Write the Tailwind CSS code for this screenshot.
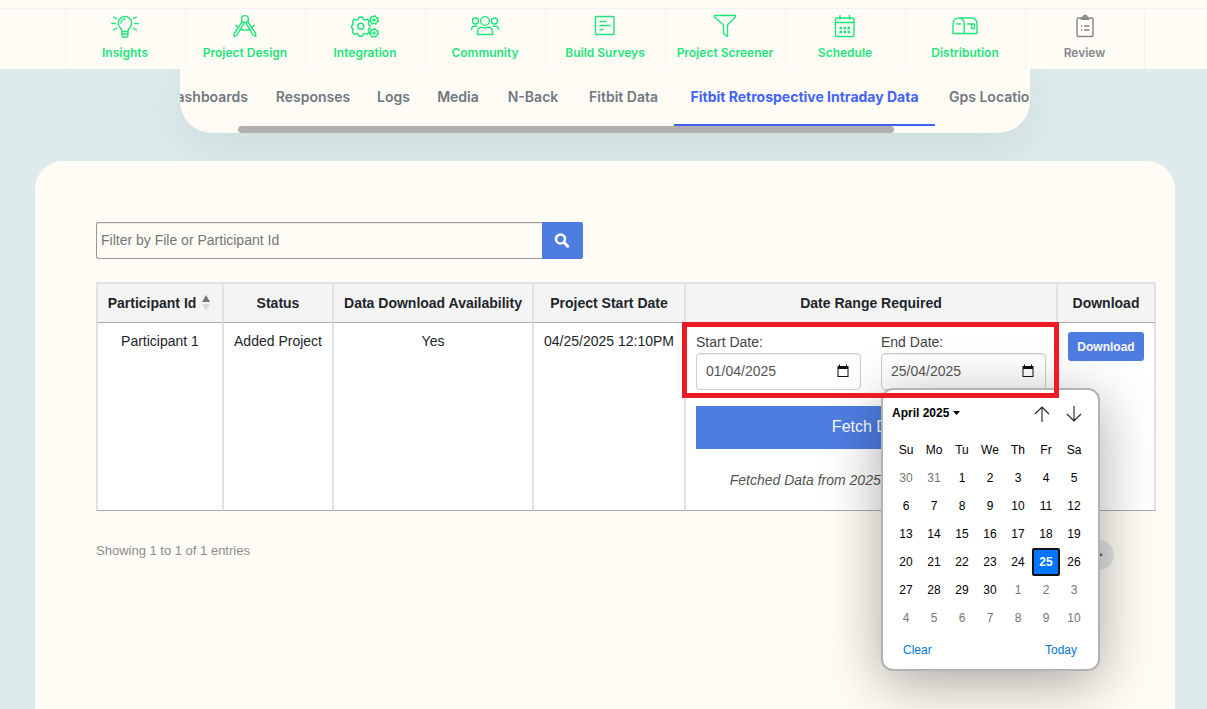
<!DOCTYPE html>
<html lang="en">
<head>
<meta charset="utf-8">
<title>Fitbit Retrospective Intraday Data</title>
<script src="https://cdn.jsdelivr.net/npm/@tailwindcss/browser@4"></script>
</head>
<body class="flex min-h-screen flex-col bg-[#ddebeb] font-['Liberation_Sans',Arial,sans-serif] text-sm text-[#212529]">

<header class="relative z-10 bg-[#fffcf5] pt-2">
  <nav class="flex justify-center border-t border-[#f2f3f5] pl-[3px] font-['Inter',sans-serif] text-xs font-semibold text-[#1fe47c]" aria-label="Project steps">
    <a href="#" class="flex h-15 w-30 flex-col items-center gap-1 border-l border-[#f4f4f4] pt-1 pr-px whitespace-nowrap">
      <svg class="h-7 w-7" viewBox="0 0 28 28" fill="none" stroke="currentColor" stroke-width="1.4" stroke-linecap="round"><path d="M11 18.500c0-2-1-2.600-2.200-4.200a6.700 6.700 0 1 1 10.400 0C18 15.900 17 16.500 17 18.500zM11 18.500v4c0 1 .8 1.500 1.500 1.500h3c.9 0 1.500-.6 1.500-1.500v-4M11 21h6M10 10a4 4 0 0 1 4-4M.8 10.500h3.400M23.800 10.500h3.400M2.500 4l3 1.700M25.500 4l-3 1.700M2.500 17l3-1.700M25.500 17l-3-1.700"/></svg>
      <span>Insights</span></a>
    <a href="#" class="flex h-15 w-30 flex-col items-center gap-1 border-l border-[#f4f4f4] pt-1 pr-px whitespace-nowrap">
      <svg class="h-7 w-7" viewBox="0 0 28 28" fill="none" stroke="currentColor" stroke-width="1.4" stroke-linejoin="round" stroke-linecap="round"><circle cx="14" cy="6" r="3.400"/><path d="M11.300 8.500L3.300 20.500v3l2.700-1.500L13.300 9.700M16.700 8.500l8 12v3L22 22 14.700 9.700M4.800 12.300l1.700 1.500M23.200 12.300l-1.700 1.500M9 16c3 1.300 7 1.300 10 0"/></svg>
      <span>Project Design</span></a>
    <a href="#" class="flex h-15 w-30 flex-col items-center gap-1 border-l border-[#f4f4f4] pt-1 pr-px whitespace-nowrap">
      <svg class="h-7 w-7" viewBox="0 0 28 28" fill="none" stroke="currentColor" stroke-width="1.4" stroke-linejoin="round"><path d="M7.400 6.300l.6-2h3.600l.6 2 1.900.8 1.900-1 2.300 2.400-1 1.900.8 1.700.8.500v2.400l-.8.400-.8 1.700 1 1.900-2.300 2.400-1.900-1-1.900.8-.6 2H8l-.6-2-1.900-.8-1.900 1-2.300-2.400 1-1.900-.8-1.700-.8-.400v-2.400l.8-.5.8-1.700-1-1.900 2.300-2.400 1.900 1z"/><circle cx="9.800" cy="13.300" r="3"/><circle cx="23" cy="7" r="3.600"/><circle cx="23" cy="7" r="1"/><circle cx="23" cy="20" r="3.600"/><circle cx="23" cy="20" r="1"/><path stroke-width="1.700" stroke-dasharray="1.800 2" d="M27.200 7a4.200 4.200 0 1 1-8.400 0 4.200 4.200 0 0 1 8.400 0M27.200 20a4.200 4.200 0 1 1-8.400 0 4.200 4.200 0 0 1 8.400 0"/></svg>
      <span>Integration</span></a>
    <a href="#" class="flex h-15 w-30 flex-col items-center gap-1 border-l border-[#f4f4f4] pt-1 pr-px whitespace-nowrap">
      <svg class="h-7 w-7" viewBox="0 0 28 28" fill="none" stroke="currentColor" stroke-width="1.400" stroke-linecap="round"><circle cx="14" cy="8" r="4.400"/><circle cx="4.500" cy="8" r="3"/><circle cx="23.500" cy="8" r="3"/><path d="M6.500 21.500v-3a4 4 0 0 1 4-4.200h1c1.700.9 3.300.9 5 0h1a4 4 0 0 1 4 4.200v3zM.7 16.500v-1a2.200 2.200 0 0 1 2.300-2.200h3M27.300 16.500v-1a2.200 2.200 0 0 0-2.300-2.200h-3"/></svg>
      <span>Community</span></a>
    <a href="#" class="flex h-15 w-30 flex-col items-center gap-1 border-l border-[#f4f4f4] pt-1 pr-px whitespace-nowrap">
      <svg class="h-7 w-7" viewBox="0 0 28 28" fill="none" stroke="currentColor" stroke-width="1.400" stroke-linecap="round"><rect x="4.500" y="3.500" width="18.500" height="18" rx="1"/><path d="M9 8.500h6M9 12.500h10M9 16.500h3"/></svg>
      <span>Build Surveys</span></a>
    <a href="#" class="flex h-15 w-30 flex-col items-center gap-1 border-l border-[#f4f4f4] pt-1 pr-px whitespace-nowrap">
      <svg class="h-7 w-7" viewBox="0 0 28 28" fill="none" stroke="currentColor" stroke-width="1.400" stroke-linejoin="round"><path d="M3.500 2.500h21V4l-8 8v11.500l-4-3V12l-9-8z"/></svg>
      <span>Project Screener</span></a>
    <a href="#" class="flex h-15 w-30 flex-col items-center gap-1 border-l border-[#f4f4f4] pt-1 pr-px whitespace-nowrap">
      <svg class="h-7 w-7" viewBox="0 0 28 28" fill="none" stroke="currentColor" stroke-width="1.400" stroke-linecap="round"><rect x="4.500" y="5" width="18.500" height="18.500" rx="1.500"/><path d="M4.500 9.500H23M9 2.500V6M18.500 2.500V6"/><path stroke-width="2.600" stroke-linecap="butt" d="M8.500 15h2.500M12.500 15H15M16.500 15H19M8.500 19h2.500M12.500 19H15M16.500 19H19"/></svg>
      <span>Schedule</span></a>
    <a href="#" class="flex h-15 w-30 flex-col items-center gap-1 border-l border-[#f4f4f4] pt-1 pr-px whitespace-nowrap">
      <svg class="h-7 w-7" viewBox="0 0 28 28" fill="none" stroke="currentColor" stroke-width="1.400" stroke-linecap="round" stroke-linejoin="round"><path d="M2 20.500V10.500a5.600 5.600 0 0 1 11.200 0v10zM7.500 5h13a5.500 5.500 0 0 1 5.500 5.500v10H13.200M6 11h3.500M16.500 11h7M20.500 11v4.500h3V11"/></svg>
      <span>Distribution</span></a>
    <a href="#" class="flex h-15 w-30 flex-col items-center gap-1 border-x border-[#f4f4f4] pt-1 pr-px whitespace-nowrap text-[#85868a]">
      <svg class="h-7 w-7" viewBox="0 0 28 28" fill="none" stroke="currentColor" stroke-width="1.400" stroke-linecap="round"><rect x="6" y="5" width="16" height="18.500" rx="1.500"/><path stroke-width="1.800" d="M10.500 6h7M12 5c0-3 4-3 4 0"/><path d="M10.500 13h.2M13.500 13H18M10.500 17h.2M13.500 17H18"/></svg>
      <span>Review</span></a>
  </nav>
</header>

<div class="relative pl-[3px]">
  <div class="mx-auto max-w-[850px] overflow-hidden rounded-b-[32px] bg-[#fffcf5] shadow-[0_12px_50px_rgba(50,80,100,0.1)]">
    <div class="flex font-['Inter',sans-serif] text-sm font-semibold whitespace-nowrap text-[#6f7881]" role="tablist">
      <button role="tab" class="flex h-[57px] w-[82px] shrink-0 items-center justify-end overflow-hidden pr-3.5 pb-0.5">Dashboards</button>
      <button role="tab" class="h-[57px] w-[102px] shrink-0 pb-0.5">Responses</button>
      <button role="tab" class="h-[57px] w-[59px] shrink-0 pb-0.5">Logs</button>
      <button role="tab" class="h-[57px] w-[70px] shrink-0 pb-0.5">Media</button>
      <button role="tab" class="h-[57px] w-[80px] shrink-0 pb-0.5">N-Back</button>
      <button role="tab" class="h-[57px] w-[101px] shrink-0 pb-0.5">Fitbit Data</button>
      <button role="tab" aria-selected="true" class="h-[57px] w-[261px] shrink-0 border-b-2 border-[#4263fb] font-bold text-[#4263fb]">Fitbit Retrospective Intraday Data</button>
      <button role="tab" class="h-[57px] shrink-0 px-3.5 pb-0.5">Gps Locations</button>
    </div>
    <div class="h-[7px] pr-[136px] pl-[58px]"><div class="h-full rounded-full bg-[#b0b0b0]"></div></div>
  </div>
</div>

<div class="relative flex flex-1 flex-col pt-7 pl-[3px]">
  <main class="mx-auto w-full max-w-[1140px] flex-1 rounded-t-[28px] bg-[#fffcf5] pt-[61px] pr-[19px] pl-[61px]">
    <form class="flex h-[37px] max-w-[487px]">
      <input type="text" aria-label="Filter by File or Participant Id" placeholder="Filter by File or Participant Id" class="min-w-0 flex-1 rounded-l-[3px] border border-r-0 border-[#999] px-1 pb-0.5 shadow-[inset_0_1px_1px_rgba(0,0,0,0.08)] placeholder:text-[#757575]">
      <button type="button" aria-label="Search" class="flex w-[41px] items-center justify-center rounded-r-[2px] bg-[#4e7de2] pr-0.5 text-white">
        <svg class="h-4 w-4" viewBox="0 0 16 16" fill="none" stroke="currentColor" stroke-width="2.600"><circle cx="6.500" cy="6" r="4.500"/><path stroke-linecap="round" stroke-width="3" d="M10.300 9.800l3.400 3.400"/></svg>
      </button>
    </form>

    <table class="mt-[23px] w-full table-fixed border-separate border-spacing-0 text-center">
      <colgroup><col class="w-[126px]"><col class="w-[110px]"><col class="w-[200px]"><col class="w-[152px]"><col><col class="w-[100px]"></colgroup>
      <thead class="bg-[#f4f4f4] whitespace-nowrap">
        <tr class="h-[41px]">
          <th class="border-t-2 border-b border-l-2 border-[#dee2e6] border-b-[#a9a9a9]"><span class="flex items-center justify-center gap-1.5 pr-0.5">Participant Id
            <svg class="h-4 w-2" viewBox="0 0 8 16"><path fill="#777" d="M0 7l4-7 4 7z"/><path fill="#d9d9d9" d="M0 9h8l-4 7z"/></svg></span></th>
          <th class="border-t-2 border-b border-l-2 border-[#dee2e6] border-b-[#a9a9a9]">Status</th>
          <th class="border-t-2 border-b border-l-2 border-[#dee2e6] border-b-[#a9a9a9]">Data Download Availability</th>
          <th class="border-t-2 border-b border-l-2 border-[#dee2e6] border-b-[#a9a9a9]">Project Start Date</th>
          <th class="border-t-2 border-b border-l-2 border-[#dee2e6] border-b-[#a9a9a9]">Date Range Required</th>
          <th class="border-x-2 border-t-2 border-b border-[#dee2e6] border-b-[#a9a9a9]">Download</th>
        </tr>
      </thead>
      <tbody class="bg-white">
        <tr class="h-[188px] align-top">
          <td class="border-b border-l-2 border-[#dee2e6] border-b-[#a9a9a9] pt-2">Participant 1</td>
          <td class="border-b border-l-2 border-[#dee2e6] border-b-[#a9a9a9] pt-2">Added Project</td>
          <td class="border-b border-l-2 border-[#dee2e6] border-b-[#a9a9a9] pt-2">Yes</td>
          <td class="border-b border-l-2 border-[#dee2e6] border-b-[#a9a9a9] pt-2 whitespace-nowrap">04/25/2025 12:10PM</td>
          <td class="relative border-b border-l-2 border-[#dee2e6] border-b-[#a9a9a9] px-2.5 pt-[9px]">
            <div class="grid grid-cols-2 gap-5 text-left text-[#444]">
              <div>
                <label for="start" class="block h-[21px]">Start Date:</label>
                <div class="flex h-[37px] items-center rounded-[4px] border border-[#ccc] bg-white pr-2.5 pb-0.5 pl-[9px] shadow-[inset_0_1px_1px_rgba(0,0,0,0.08)]">
                  <input id="start" type="text" value="01/04/2025" class="min-w-0 flex-1 text-[#555]">
                  <button type="button" aria-label="Open start date calendar"><svg class="h-3.5 w-3.5" viewBox="0 0 14 14"><path fill="#111" fill-rule="evenodd" d="M1.500 2H3V0.500h1V2h6V0.500h1V2h1.500v11h-11zM2.500 5v7h9V5z"/></svg></button>
                </div>
              </div>
              <div class="relative">
                <label for="end" class="block h-[21px]">End Date:</label>
                <div class="flex h-[37px] items-center rounded-[4px] border border-[#ccc] bg-white pr-2.5 pb-0.5 pl-[9px] shadow-[inset_0_1px_1px_rgba(0,0,0,0.08)]">
                  <input id="end" type="text" value="25/04/2025" class="min-w-0 flex-1 text-[#555]">
                  <button type="button" aria-label="Open end date calendar"><svg class="h-3.5 w-3.5" viewBox="0 0 14 14"><path fill="#111" fill-rule="evenodd" d="M1.500 2H3V0.500h1V2h6V0.500h1V2h1.500v11h-11zM2.500 5v7h9V5z"/></svg></button>
                </div>

                <div role="dialog" aria-label="Choose date" class="absolute top-[56px] left-0 z-20 w-[219px] rounded-xl border-2 border-[#b3b3b3] bg-white pt-2 pr-2 pb-[9px] pl-[9px] text-xs text-black shadow-[0_12px_56px_rgba(0,0,0,0.34)]">
                  <div class="flex h-[38px] items-start">
                    <button type="button" class="flex h-8 flex-1 items-center gap-1 pb-0.5 font-bold">April 2025
                      <svg class="h-1 w-[7px]" viewBox="0 0 7 4"><path d="M0 0h7L3.500 4z"/></svg></button>
                    <button type="button" aria-label="Previous month" class="flex h-8 w-8 items-center justify-center"><svg class="h-4 w-4" viewBox="0 0 16 16" fill="none" stroke="#222" stroke-width="1.100"><path d="M8 16V1M1 8l7-7 7 7"/></svg></button>
                    <button type="button" aria-label="Next month" class="flex h-8 w-8 items-center justify-center"><svg class="h-4 w-4" viewBox="0 0 16 16" fill="none" stroke="#222" stroke-width="1.100"><path d="M8 0v15M1 8l7 7 7-7"/></svg></button>
                  </div>
                  <table class="table-fixed border-collapse text-center [&_td]:h-7 [&_td]:w-7 [&_td]:p-0 [&_th]:h-7 [&_th]:w-7 [&_th]:p-0 [&_th]:font-normal">
                    <thead><tr><th>Su</th><th>Mo</th><th>Tu</th><th>We</th><th>Th</th><th>Fr</th><th>Sa</th></tr></thead>
                    <tbody>
                      <tr><td class="text-[#767676]">30</td><td class="text-[#767676]">31</td><td>1</td><td>2</td><td>3</td><td>4</td><td>5</td></tr>
                      <tr><td>6</td><td>7</td><td>8</td><td>9</td><td>10</td><td>11</td><td>12</td></tr>
                      <tr><td>13</td><td>14</td><td>15</td><td>16</td><td>17</td><td>18</td><td>19</td></tr>
                      <tr><td>20</td><td>21</td><td>22</td><td>23</td><td>24</td><td><button type="button" aria-pressed="true" class="block h-7 w-7 rounded-[2px] border-2 border-[#101010] bg-[#0075ff] font-bold text-white">25</button></td><td>26</td></tr>
                      <tr><td>27</td><td>28</td><td>29</td><td>30</td><td class="text-[#767676]">1</td><td class="text-[#767676]">2</td><td class="text-[#767676]">3</td></tr>
                      <tr class="text-[#767676]"><td>4</td><td>5</td><td>6</td><td>7</td><td>8</td><td>9</td><td>10</td></tr>
                    </tbody>
                  </table>
                  <div class="flex justify-between pt-2 pr-[13px] pl-[11px] text-[#0078d4]">
                    <button type="button" class="h-5">Clear</button>
                    <button type="button" class="h-5">Today</button>
                  </div>
                </div>
              </div>
            </div>
            <div class="pointer-events-none absolute -top-px -right-[3px] -left-1 z-30 h-[76px] border-5 border-[#ed1c24]"></div>
            <button type="button" class="mt-4 block h-[43px] w-full bg-[#4e7de2] pb-0.5 text-base text-white">Fetch Data</button>
            <p class="mt-[21px] text-[#555] italic">Fetched Data from 2025-04-01 to 2025-04-25</p>
          </td>
          <td class="border-x-2 border-b border-[#dee2e6] border-b-[#a9a9a9] px-2.5 pt-[9px]">
            <button type="button" class="block h-[29px] w-full rounded-[3px] bg-[#4e7de2] text-xs font-bold text-[#f8f8f8]">Download</button>
          </td>
        </tr>
      </tbody>
    </table>

    <div class="mt-[29px] flex items-start justify-between pr-[42px] text-[13px] text-[#8c8c8a]">
      <p class="leading-[22px]">Showing 1 to 1 of 1 entries</p>
      <button type="button" aria-label="Next page" class="h-[30px] w-[30px] rounded-full bg-[#e4e4e4] text-[#444]">&gt;</button>
    </div>
  </main>
</div>
</body>
</html>
